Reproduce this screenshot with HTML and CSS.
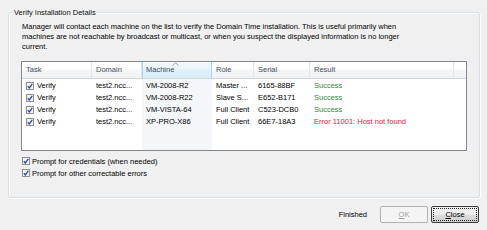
FILE: index.html
```html
<!DOCTYPE html>
<html>
<head>
<meta charset="utf-8">
<title>Verify Installation Details</title>
<link rel="stylesheet" href="styles.css">
</head>
<body>
<svg class="defs" width="0" height="0" aria-hidden="true">
  <symbol id="chk" viewBox="0 0 8 8">
    <rect x="0.5" y="0.5" width="7" height="7" fill="#f1f2f3" stroke="#8e9194"/>
    <path d="M1.8 4.2 L3.3 5.9 L6.3 1.9" stroke="#2b48a8" stroke-width="1.3" fill="none"/>
  </symbol>
</svg>
<div class="dialog">
  <section class="group">
    <div class="legend">Verify Installation Details</div>
    <p class="desc">Manager will contact each machine on the list to verify the Domain Time installation. This is useful primarily when<br>machines are not reachable by broadcast or multicast, or when you suspect the displayed information is no longer<br>current.</p>
    <div class="list">
      <table>
        <colgroup>
          <col class="c-task"><col class="c-domain"><col class="c-machine"><col class="c-role"><col class="c-serial"><col class="c-result"><col class="c-fill">
        </colgroup>
        <thead>
          <tr>
            <th>Task</th>
            <th>Domain</th>
            <th class="sorted">Machine<svg class="arrow" viewBox="0 0 7 4" width="7" height="4"><path d="M0.5 3.5 L3.5 0.8 L6.5 3.5" stroke="#8fa3bd" stroke-width="1" fill="none"/></svg></th>
            <th>Role</th>
            <th>Serial</th>
            <th>Result</th>
            <th class="last"></th>
          </tr>
        </thead>
        <tbody>
          <tr>
            <td><span class="task"><svg class="cb" width="8" height="8"><use href="#chk"/></svg>Verify</span></td>
            <td>test2.ncc...</td><td class="mcol">VM-2008-R2</td><td>Master ...</td><td>6165-88BF</td><td class="ok">Success</td><td></td>
          </tr>
          <tr>
            <td><span class="task"><svg class="cb" width="8" height="8"><use href="#chk"/></svg>Verify</span></td>
            <td>test2.ncc...</td><td class="mcol">VM-2008-R22</td><td>Slave S...</td><td>E652-B171</td><td class="ok">Success</td><td></td>
          </tr>
          <tr>
            <td><span class="task"><svg class="cb" width="8" height="8"><use href="#chk"/></svg>Verify</span></td>
            <td>test2.ncc...</td><td class="mcol">VM-VISTA-64</td><td>Full Client</td><td>C523-DCB0</td><td class="ok">Success</td><td></td>
          </tr>
          <tr>
            <td><span class="task"><svg class="cb" width="8" height="8"><use href="#chk"/></svg>Verify</span></td>
            <td>test2.ncc...</td><td class="mcol">XP-PRO-X86</td><td>Full Client</td><td>66E7-18A3</td><td class="err">Error 11001: Host not found</td><td></td>
          </tr>
          <tr class="filler">
            <td></td><td></td><td class="mcol"></td><td></td><td></td><td></td><td></td>
          </tr>
        </tbody>
      </table>
    </div>
    <div class="opts">
      <label class="opt"><svg class="cb" width="8" height="8"><use href="#chk"/></svg>Prompt for credentials (when needed)</label>
      <label class="opt"><svg class="cb" width="8" height="8"><use href="#chk"/></svg>Prompt for other correctable errors</label>
    </div>
  </section>
  <footer class="bar">
    <span class="status">Finished</span>
    <button class="btn" disabled><u>O</u>K</button>
    <button class="btn default"><u>C</u>lose</button>
  </footer>
</div>
</body>
</html>
```
FILE: styles.css
```css
html, body {
  margin: 0;
  padding: 0;
}
body {
  width: 487px;
  height: 230px;
  overflow: hidden;
  background: #f0f0f0;
  font-family: "Liberation Sans", Arial, sans-serif;
  font-size: 7.5px;
  color: #000;
}
.defs {
  position: absolute;
  width: 0;
  height: 0;
}
.dialog {
  padding: 12px 7px 0 8px;
}
.group {
  position: relative;
  border: 1px solid #d5dfe5;
  border-radius: 3px;
  box-shadow: inset 1px 1px 0 #fff, 1px 1px 0 #fff;
  padding: 9px 12px 18px 12px;
}
.legend {
  position: absolute;
  top: -6px;
  left: 4px;
  padding: 0 1px;
  line-height: 12px;
  background: #f0f0f0;
  color: #111;
}
.desc {
  margin: 0 0 9px 1px;
  line-height: 10px;
  white-space: nowrap;
}
.list {
  width: 444px;
  border: 1px solid #828790;
  background: #fff;
  height: 88px;
  overflow: hidden;
}
.list table {
  width: 444px;
  table-layout: fixed;
  border-collapse: separate;
  border-spacing: 0;
}
.c-task { width: 70px; }
.c-domain { width: 50px; }
.c-machine { width: 70px; }
.c-role { width: 42px; }
.c-serial { width: 56px; }
.c-result { width: 144px; }
.c-fill { width: 12px; }
th {
  position: relative;
  height: 16px;
  padding: 0 0 0 4px;
  font-weight: normal;
  text-align: left;
  color: #3e4d60;
  line-height: 16px;
  background: linear-gradient(#ffffff 0%, #ffffff 45%, #f4f5f7 50%, #f1f2f4 100%);
  border-bottom: 1px solid #d5d5d5;
  border-right: 1px solid #e3e4e6;
  white-space: nowrap;
}
th.last {
  border-right: none;
}
th.sorted {
  background: linear-gradient(#f3f9fd 0%, #eaf5fb 45%, #def0fa 50%, #d8edf8 100%);
  border-right: 1px solid #96d9f9;
  box-shadow: inset 1px 0 0 #96d9f9;
}
.arrow {
  position: absolute;
  top: 0;
  left: 30px;
}
td {
  height: 12px;
  padding: 0 0 0 4px;
  line-height: 12px;
  white-space: nowrap;
  overflow: hidden;
}
tbody tr:first-child td {
  padding-top: 1px;
}
tr.filler td {
  height: 22px;
}
td.mcol {
  background: #f4f6f9;
}
.task {
  display: flex;
  align-items: center;
  gap: 3px;
}
.cb {
  display: block;
  flex: none;
}
.ok {
  color: #2f8a32;
}
.err {
  color: #e3163b;
}
.opts {
  margin-top: 4px;
  display: flex;
  flex-direction: column;
}
.opt {
  display: flex;
  align-items: center;
  gap: 2px;
  height: 12px;
  padding-left: 1px;
}
.bar {
  display: flex;
  justify-content: flex-end;
  align-items: center;
  gap: 3px;
  padding: 8px 1px 0 0;
}
.status {
  margin-right: 10px;
}
.btn {
  width: 48px;
  height: 17px;
  padding: 0;
  font: inherit;
  color: #000;
  border: 1px solid #707070;
  border-radius: 2px;
  background: linear-gradient(#f2f2f2 0%, #ebebeb 50%, #dddddd 50%, #cfcfcf 100%);
}
.btn.default {
  border-color: #3c3c3c;
  outline: 1px dotted #222;
  outline-offset: -3px;
}
.btn:disabled {
  border-color: #adb2b5;
  background: #f4f4f4;
  color: #a0a0a0;
}
```
